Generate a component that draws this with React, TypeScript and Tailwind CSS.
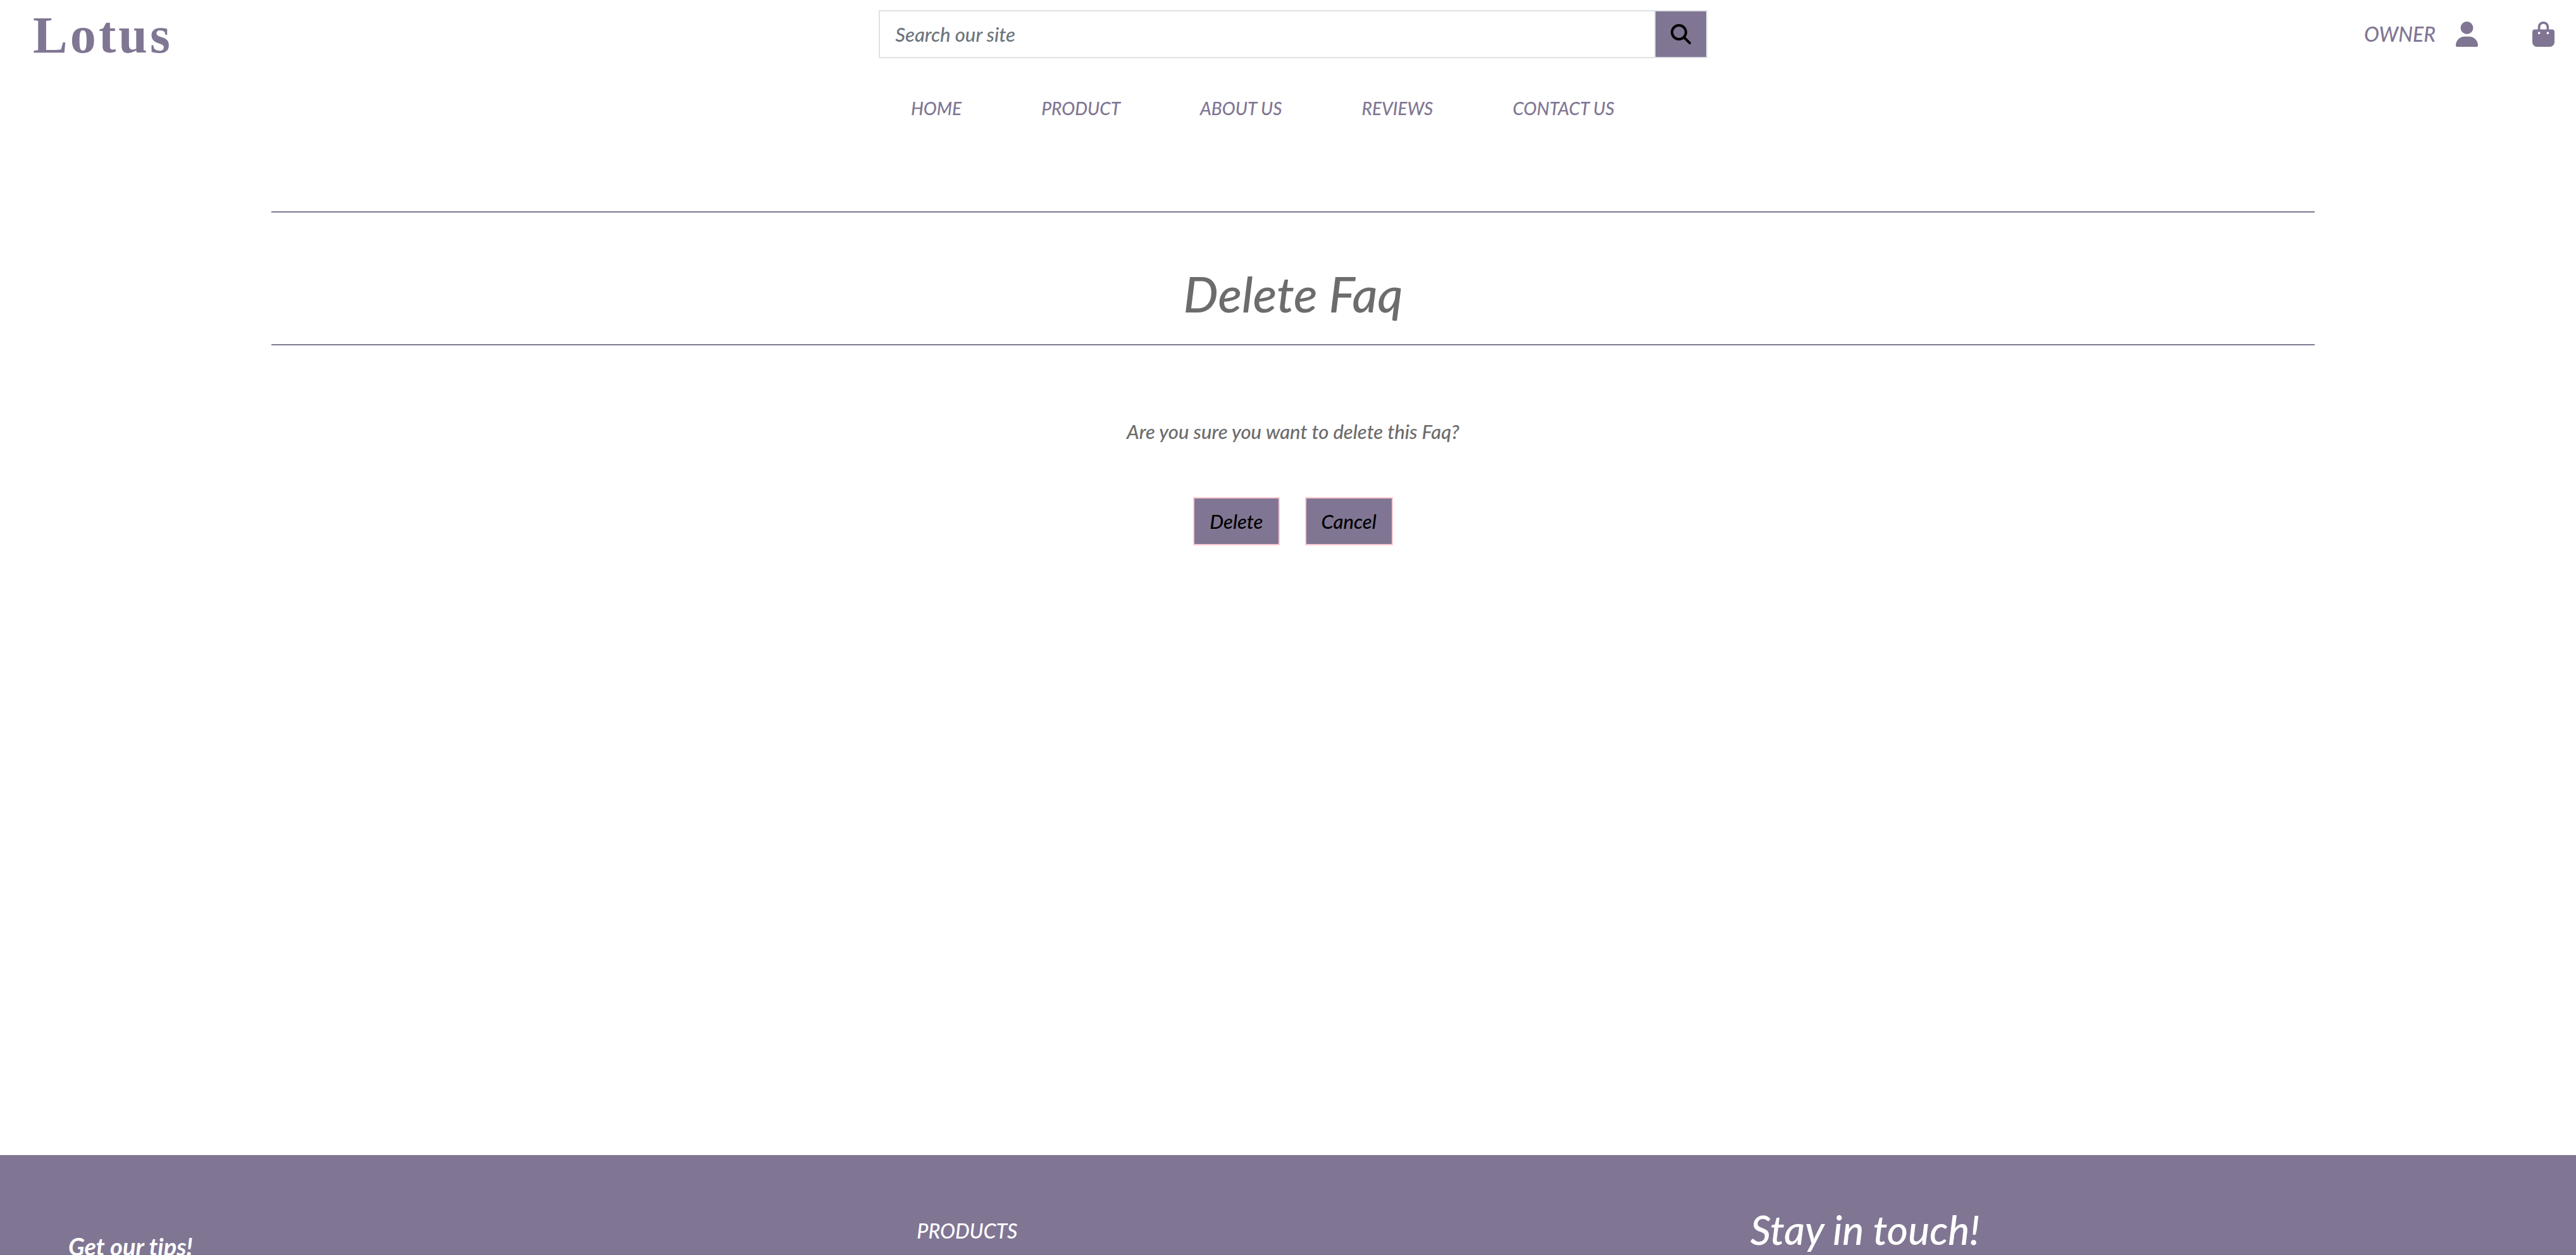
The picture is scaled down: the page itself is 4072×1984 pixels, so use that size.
import { FaBagShopping, FaMagnifyingGlass, FaUser } from "react-icons/fa6";

const links = ["HOME", "PRODUCT", "ABOUT US", "REVIEWS", "CONTACT US"];

function Header() {
  return (
    <header className="text-[#807693]">
      <div className="grid grid-cols-3 items-start">
        <a
          href="#"
          className="pt-3 pl-[52px] font-['Liberation_Serif',serif] text-[82px] leading-[88px] font-bold tracking-wider not-italic"
        >
          Lotus
        </a>
        <form className="flex pt-4 pr-4 pl-8" onSubmit={(e) => e.preventDefault()}>
          <input
            type="text"
            aria-label="Search our site"
            placeholder="Search our site"
            className="h-[76px] min-w-0 flex-1 border-2 border-[#dee2e6] bg-white px-6 text-[31px] text-[#212529] italic outline-none placeholder:text-[#6c757d]"
          />
          <button
            type="submit"
            aria-label="Search"
            className="-ml-0.5 flex h-[76px] w-[84px] items-center justify-center border-2 border-[#dee2e6] bg-[#807693] text-black"
          >
            <FaMagnifyingGlass className="size-8" />
          </button>
        </form>
        <div className="flex items-center justify-end pt-[30px] pr-[34px] text-[32px] leading-[48px]">
          <a href="#" className="flex items-center gap-8">
            OWNER
            <FaUser className="h-10 w-[35px]" />
          </a>
          <a href="#" aria-label="Shopping bag" className="ml-[86px]">
            <FaBagShopping className="h-10 w-[35px]" />
          </a>
        </div>
      </div>
      <nav className="flex justify-center gap-[126px] pt-[50px] pr-[80px] text-[28px] leading-[42px]">
        {links.map((label) => (
          <a key={label} href="#">
            {label}
          </a>
        ))}
      </nav>
    </header>
  );
}

function DeleteFaq() {
  const button =
    "h-[76px] border-2 border-[#ffc8d0] bg-[#807693] px-6 text-[31px] text-black italic";
  return (
    <main className="flex-1 pt-[142px] pr-[90px] pl-[106px] text-center text-[#6c6c6c]">
      <div className="mx-auto w-5/6">
        <h1 className="border-y-2 border-[#807693] pt-20 pb-8 text-[78px] leading-24">
          Delete Faq
        </h1>
        <p className="pt-28 text-[31px] leading-12">Are you sure you want to delete this Faq?</p>
        <div className="flex justify-center gap-10 pt-20">
          <button type="button" className={button}>
            Delete
          </button>
          <button type="button" className={button}>
            Cancel
          </button>
        </div>
      </div>
    </main>
  );
}

function Footer() {
  return (
    <footer className="grid h-[158px] shrink-0 grid-cols-3 overflow-hidden bg-[#807693] text-white">
      <h2 className="pt-[120px] pl-[108px] text-[38px] leading-12 font-bold">Get our tips!</h2>
      <h2 className="pt-24 pl-[92px] text-[32px] leading-12">PRODUCTS</h2>
      <h2 className="pt-20 pl-[52px] text-[64px] leading-[76px]">Stay in touch!</h2>
    </footer>
  );
}

export default function App() {
  return (
    <div className="flex h-screen flex-col overflow-hidden bg-white font-[Lato,sans-serif] font-medium italic [font-variant-ligatures:none]">
      <Header />
      <DeleteFaq />
      <Footer />
    </div>
  );
}
